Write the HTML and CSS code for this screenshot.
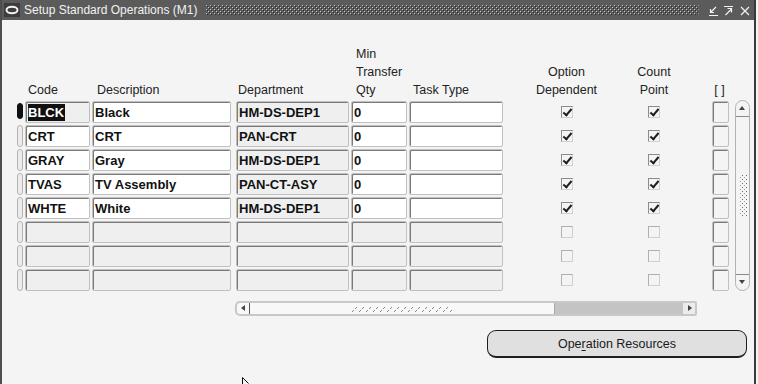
FILE: index.html
```html
<!DOCTYPE html>
<html lang="en">
<head>
    <meta charset="UTF-8">
    <title>Setup Standard Operations (M1)</title>
    <link rel="stylesheet" href="styles.css">
</head>
<body>
<div class="window">
    <div class="titlebar">
        <span class="app-icon">
            <svg width="14" height="10" viewBox="0 0 14 10"><ellipse cx="7" cy="5" rx="5.5" ry="3.2" fill="none" stroke="#f2f2f2" stroke-width="2"/></svg>
        </span>
        <span class="title">Setup Standard Operations (M1)</span>
        <svg class="grip" height="10">
            <defs>
                <pattern id="dots" width="4" height="4" patternUnits="userSpaceOnUse">
                    <rect x="0" y="0" width="1" height="1" fill="#c4c4c4"/>
                    <rect x="1" y="1" width="1" height="1" fill="#2e2e2e"/>
                    <rect x="2" y="2" width="1" height="1" fill="#c4c4c4"/>
                    <rect x="3" y="3" width="1" height="1" fill="#2e2e2e"/>
                </pattern>
            </defs>
            <rect width="100%" height="100%" fill="url(#dots)"/>
        </svg>
        <svg class="win-btns" width="44" height="20" viewBox="0 0 44 20">
            <g stroke="#f2f2f2" stroke-width="1.2" fill="none">
                <path d="M2 15.5h9M9 7l-5.5 5.5M3.5 9v3.5H7"/>
                <path d="M17 6.5h9M18.5 15l6-6M20.5 8.5h4v4"/>
                <path d="M34 7l8 8M42 7l-8 8"/>
            </g>
        </svg>
    </div>

    <div class="content">
        <div class="table">
            <div class="hd"></div>
            <div class="hd h-code">Code</div>
            <div class="hd h-desc">Description</div>
            <div class="hd h-dept">Department</div>
            <div class="hd h-qty">Min<br>Transfer<br>Qty</div>
            <div class="hd h-task">Task Type</div>
            <div class="hd center">Option<br>Dependent</div>
            <div class="hd center">Count<br>Point</div>
            <div class="hd h-br">[ ]</div>
            <div class="hd"></div>

            <!-- row 1 -->
            <span class="ind cur"></span>
            <span class="fld ro w-code"><span class="sel">BLCK</span></span>
            <span class="fld w-desc">Black</span>
            <span class="fld ro w-dept">HM-DS-DEP1</span>
            <span class="fld w-qty">0</span>
            <span class="fld w-task"></span>
            <span class="cb"><span class="chk on"></span></span>
            <span class="cb"><span class="chk on"></span></span>
            <span class="fld sm"></span>

            <div class="vscroll">
                <span class="vs-btn up"></span>
                <svg class="vs-grip" width="8" height="42">
                    <defs>
                        <pattern id="vdots" width="4" height="4" patternUnits="userSpaceOnUse">
                            <rect x="3" y="0" width="1" height="1" fill="#6a6a6a"/>
                            <rect x="1" y="2" width="1" height="1" fill="#9a9a9a"/>
                        </pattern>
                    </defs>
                    <rect width="8" height="42" fill="url(#vdots)"/>
                </svg>
                <span class="vs-btn down"></span>
            </div>

            <!-- row 2 -->
            <span class="ind"></span>
            <span class="fld w-code">CRT</span>
            <span class="fld w-desc">CRT</span>
            <span class="fld ro w-dept">PAN-CRT</span>
            <span class="fld w-qty">0</span>
            <span class="fld w-task"></span>
            <span class="cb"><span class="chk on"></span></span>
            <span class="cb"><span class="chk on"></span></span>
            <span class="fld sm"></span>

            <!-- row 3 -->
            <span class="ind"></span>
            <span class="fld w-code">GRAY</span>
            <span class="fld w-desc">Gray</span>
            <span class="fld ro w-dept">HM-DS-DEP1</span>
            <span class="fld w-qty">0</span>
            <span class="fld w-task"></span>
            <span class="cb"><span class="chk on"></span></span>
            <span class="cb"><span class="chk on"></span></span>
            <span class="fld sm"></span>

            <!-- row 4 -->
            <span class="ind"></span>
            <span class="fld w-code">TVAS</span>
            <span class="fld w-desc">TV Assembly</span>
            <span class="fld ro w-dept">PAN-CT-ASY</span>
            <span class="fld w-qty">0</span>
            <span class="fld w-task"></span>
            <span class="cb"><span class="chk on"></span></span>
            <span class="cb"><span class="chk on"></span></span>
            <span class="fld sm"></span>

            <!-- row 5 -->
            <span class="ind"></span>
            <span class="fld w-code">WHTE</span>
            <span class="fld w-desc">White</span>
            <span class="fld ro w-dept">HM-DS-DEP1</span>
            <span class="fld w-qty">0</span>
            <span class="fld w-task"></span>
            <span class="cb"><span class="chk on"></span></span>
            <span class="cb"><span class="chk on"></span></span>
            <span class="fld sm"></span>

            <!-- empty rows -->
            <span class="ind"></span>
            <span class="fld ro w-code"></span>
            <span class="fld ro w-desc"></span>
            <span class="fld ro w-dept"></span>
            <span class="fld ro w-qty"></span>
            <span class="fld ro w-task"></span>
            <span class="cb"><span class="chk"></span></span>
            <span class="cb"><span class="chk"></span></span>
            <span class="fld sm"></span>

            <span class="ind"></span>
            <span class="fld ro w-code"></span>
            <span class="fld ro w-desc"></span>
            <span class="fld ro w-dept"></span>
            <span class="fld ro w-qty"></span>
            <span class="fld ro w-task"></span>
            <span class="cb"><span class="chk"></span></span>
            <span class="cb"><span class="chk"></span></span>
            <span class="fld sm"></span>

            <span class="ind"></span>
            <span class="fld ro w-code"></span>
            <span class="fld ro w-desc"></span>
            <span class="fld ro w-dept"></span>
            <span class="fld ro w-qty"></span>
            <span class="fld ro w-task"></span>
            <span class="cb"><span class="chk"></span></span>
            <span class="cb"><span class="chk"></span></span>
            <span class="fld sm"></span>
        </div>

        <div class="hscroll">
            <span class="hs-btn left"></span>
            <span class="hs-thumb">
                <svg width="100" height="6">
                    <defs>
                        <pattern id="hdots" width="7" height="6" patternUnits="userSpaceOnUse">
                            <rect x="4" y="1" width="1" height="1" fill="#8a8a8a"/>
                            <rect x="3" y="2" width="1" height="1" fill="#8a8a8a"/>
                            <rect x="1" y="4" width="1" height="1" fill="#8a8a8a"/>
                            <rect x="0" y="5" width="1" height="1" fill="#8a8a8a"/>
                        </pattern>
                    </defs>
                    <rect width="100" height="6" fill="url(#hdots)"/>
                </svg>
            </span>
            <span class="hs-track"></span>
            <span class="hs-btn right"></span>
        </div>

        <div class="actions">
            <button class="btn">Ope<u>r</u>ation Resources</button>
        </div>
    </div>

    <svg class="cursor" width="9" height="8" viewBox="0 0 9 8">
        <path d="M0.5 0.5V7.5M0.5 0.5L6.5 6.5" stroke="#111" stroke-width="1" fill="none"/>
    </svg>
</div>
</body>
</html>
```

FILE: styles.css
```css
body {
    margin: 0;
    background: #f4f4f4;
    font-family: "Liberation Sans", Arial, sans-serif;
    font-size: 12px;
    color: #111;
}
.window {
    position: relative;
    width: 752px;
    height: 384px;
    border-left: 2px solid #4e4e4e;
    border-right: 2px solid #3a3a3a;
    background: #f4f4f4;
    overflow: hidden;
}
.titlebar {
    display: flex;
    align-items: center;
    height: 20px;
    background: #5b5b5b;
    color: #f2f2f2;
    padding-left: 2px;
}
.app-icon {
    display: flex;
    align-items: center;
    justify-content: center;
    width: 16px;
    height: 14px;
    background: #3d3d3d;
}
.title {
    margin-left: 4px;
    white-space: nowrap;
    font-size: 12px;
}
.grip {
    flex: 1;
    margin: 0 8px 0 9px;
}
.win-btns {
    margin-right: 3px;
}

.content {
    padding: 25px 0 0 15px;
}
.table {
    display: grid;
    grid-template-columns: 8px 67px 144px 115px 58px 94px 127px 48px 51px 21px;
    grid-template-rows: 54px repeat(8, 22px);
    row-gap: 2px;
}
.hd {
    align-self: end;
    line-height: 18px;
    font-size: 12.5px;
    color: #222;
    white-space: nowrap;
}
.h-code { padding-left: 3px; }
.h-desc { padding-left: 5px; }
.h-dept { padding-left: 2px; }
.h-qty { padding-left: 5px; }
.h-task { padding-left: 4px; }
.h-br {
    justify-self: end;
    width: 17px;
    margin-right: 1px;
    text-align: center;
}
.center {
    text-align: center;
}

.ind {
    width: 6px;
    height: 22px;
    box-sizing: border-box;
    border: 1px solid #b4b4b4;
    border-radius: 3px;
    background: #ececec;
}
.ind.cur {
    height: 16px;
    margin-top: 2px;
    border-color: #111;
    background: #111;
}
.fld {
    display: block;
    height: 22px;
    box-sizing: border-box;
    border: 1px solid #c0c0c0;
    border-radius: 2px;
    box-shadow: inset 1px 1px 0 #7a7a7a;
    background: #fff;
    padding: 1px 0 0 2px;
    font-size: 13px;
    font-weight: bold;
    line-height: 20px;
    white-space: nowrap;
    overflow: hidden;
}
.fld.ro {
    background: #efefef;
}
.w-code { width: 65px; }
.w-desc { width: 139px; }
.w-dept { width: 113px; }
.w-qty { width: 56px; }
.w-task { width: 94px; }
.fld.sm {
    justify-self: end;
    width: 17px;
    background: #f4f4f4;
}
.sel {
    background: #111;
    color: #fff;
    padding: 1px 1px 1px 0;
}

.cb {
    display: flex;
    align-items: center;
    justify-content: center;
}
.chk {
    position: relative;
    width: 12px;
    height: 12px;
    box-sizing: border-box;
    border: 1px solid #d0d0d0;
    border-top-color: #8c8c8c;
    border-left-color: #8c8c8c;
    background: #f4f4f4;
}
.chk.on::after {
    content: "";
    position: absolute;
    left: 3px;
    top: 0;
    width: 3px;
    height: 7px;
    border-right: 2.5px solid #1e1e1e;
    border-bottom: 2.5px solid #1e1e1e;
    transform: rotate(40deg);
}
.chk:not(.on) {
    border-color: #cfcfcf;
    border-top-color: #b0b0b0;
    border-left-color: #b0b0b0;
}

.vscroll {
    grid-column: 10;
    grid-row: 2 / span 8;
    justify-self: end;
    width: 15px;
    margin-top: -1px;
    box-sizing: border-box;
    display: flex;
    flex-direction: column;
    justify-content: space-between;
    align-items: center;
    border: 1px solid #b2b2b2;
    border-radius: 8px;
    background: #f4f4f4;
}
.vs-btn {
    position: relative;
    width: 13px;
    height: 15px;
}
.vs-btn.up {
    border-bottom: 1px solid #8a8a8a;
}
.vs-btn.down {
    border-top: 1px solid #8a8a8a;
}
.vs-btn::after {
    content: "";
    position: absolute;
    left: 3px;
    width: 0;
    height: 0;
    border-left: 3.5px solid transparent;
    border-right: 3.5px solid transparent;
}
.vs-btn.up::after {
    top: 5px;
    border-bottom: 4px solid #444;
}
.vs-btn.down::after {
    top: 5px;
    border-top: 4px solid #444;
}

.hscroll {
    display: flex;
    width: 462px;
    height: 15px;
    margin: 10px 0 0 218px;
    box-sizing: border-box;
    border: 2px solid #c8c8c8;
    border-radius: 5px 2px 2px 5px;
    background: #f8f8f8;
}
.hs-btn {
    position: relative;
    width: 12px;
}
.hs-btn.left {
    border-right: 1px solid #555;
}
.hs-btn.right {
    background: #ececec;
    width: 12px;
}
.hs-btn::after {
    content: "";
    position: absolute;
    top: 2px;
    width: 0;
    height: 0;
    border-top: 3.5px solid transparent;
    border-bottom: 3.5px solid transparent;
}
.hs-btn.left::after {
    left: 4px;
    border-right: 4px solid #444;
}
.hs-btn.right::after {
    left: 5px;
    border-left: 4px solid #444;
}
.hs-thumb {
    flex: 1;
    display: flex;
    align-items: center;
    justify-content: center;
}
.hs-track {
    width: 128px;
    background: #c4c4c4;
    border-left: 1px solid #a8a8a8;
}

.actions {
    padding: 14px 0 0 470px;
}
.btn {
    display: block;
    width: 260px;
    height: 28px;
    margin: 0;
    padding: 0;
    border: 1px solid #1e1e1e;
    border-bottom-width: 2px;
    border-radius: 9px;
    background: #e0e0e0;
    font-family: "Liberation Sans", Arial, sans-serif;
    font-size: 12.5px;
    color: #1a1a1a;
}
.btn u {
    text-underline-offset: 2px;
}

.cursor {
    position: absolute;
    left: 240px;
    top: 377px;
}
```
